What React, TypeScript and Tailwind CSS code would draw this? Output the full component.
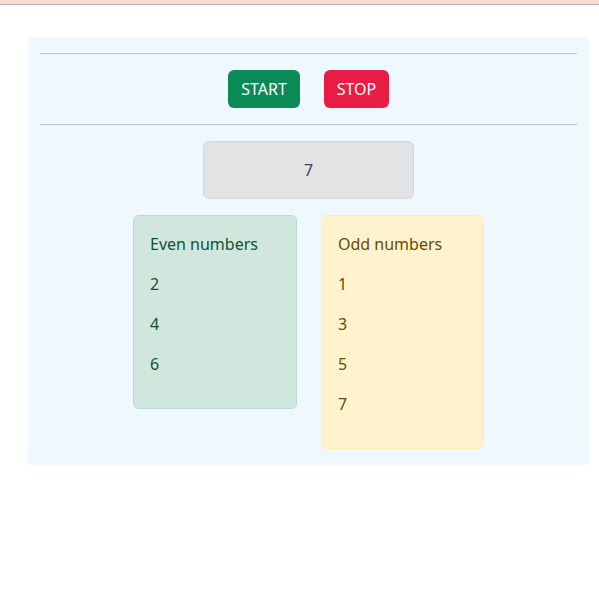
export default function App() {
  const even = [2, 4, 6];
  const odd = [1, 3, 5, 7];

  return (
    <div className="min-h-[599px] bg-white font-['Noto_Sans',sans-serif] text-base leading-6">
      <div className="h-[5px] border-b border-[#c9aaa9] bg-[#f8dcd6]" />
      <div className="px-[28px] pt-[32px] pr-[10px]">
        <div className="rounded bg-[#eff7ff] px-3 pb-4">
          <div className="h-4" />
          <hr className="border-t border-[#bfc4ca]" />
          <div className="flex justify-center gap-6 py-4">
            <button className="h-[38px] w-[72px] rounded-md bg-[#0a8a56] text-white">START</button>
            <button className="h-[38px] w-[65px] rounded-md bg-[#e81c45] text-white">STOP</button>
          </div>
          <hr className="border-t border-[#bfc4ca]" />
          <div className="flex justify-center pt-4">
            <div className="w-[211px] rounded-md border border-[#d3d6d8] bg-[#e2e3e5] p-4 text-center text-[#41464b]">
              7
            </div>
          </div>
          <div className="flex items-start justify-center gap-[24px] pt-4">
            <div className="w-[164px] rounded-md border border-[#badbcc] bg-[#d1e7dd] p-4 text-[#0f5132]">
              <p className="mb-4">Even numbers</p>
              {even.map((n) => (
                <p key={n} className="mb-4">{n}</p>
              ))}
            </div>
            <div className="w-[163px] rounded-md border border-[#ffecb5] bg-[#fff3cd] p-4 text-[#664d03]">
              <p className="mb-4">Odd numbers</p>
              {odd.map((n) => (
                <p key={n} className="mb-4">{n}</p>
              ))}
            </div>
          </div>
        </div>
      </div>
    </div>
  );
}
